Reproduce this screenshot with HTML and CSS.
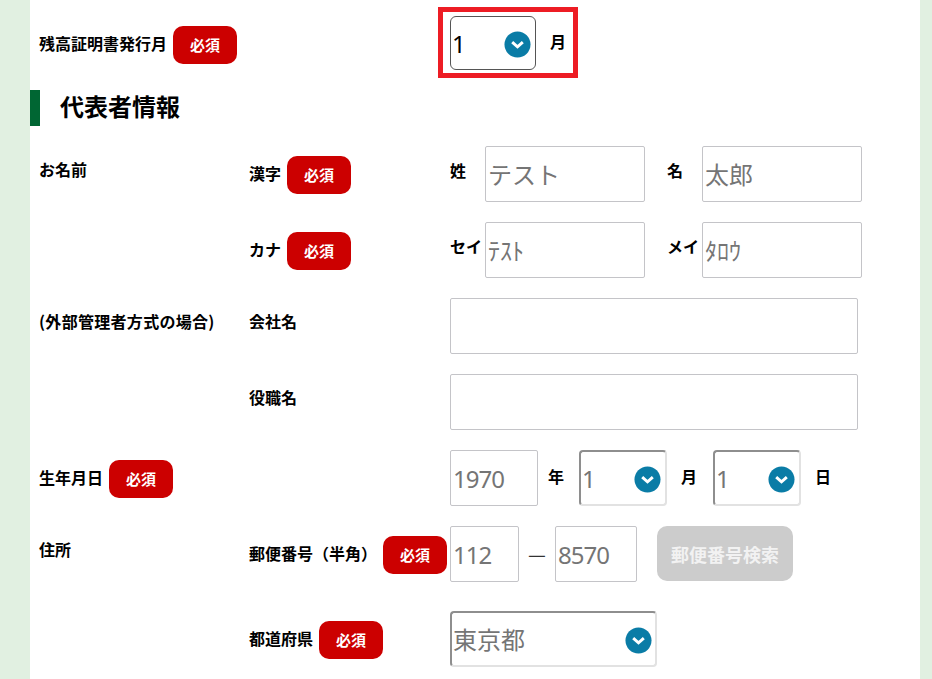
FILE: index.html
```html
<!DOCTYPE html>
<html lang="ja">

<head>
    <meta charset="utf-8">
    <title>残高証明書発行</title>
    <link rel="stylesheet" href="styles.css">
</head>

<body>
    <svg class="defs" width="0" height="0">
        <symbol id="chevron" viewBox="0 0 28 28">
            <circle cx="14" cy="14" r="13.5" fill="#0a7ca6"></circle>
            <path d="M8.500 11.500 L14 16.500 L19.500 11.500" fill="none" stroke="#fff" stroke-width="3"></path>
        </symbol>
    </svg>

    <div class="card">
        <div class="row row-short">
            <div class="label-cell span-two">
                <span class="label">残高証明書発行月</span>
                <span class="badge">必須</span>
            </div>
            <div class="fields">
                <div class="highlight">
                    <div class="select-wrap w86">
                        <select class="select select-dark">
                            <option>1</option>
                        </select>
                        <svg class="chevron"><use href="#chevron"></use></svg>
                    </div>
                    <span class="label unit">月</span>
                </div>
            </div>
        </div>

        <h2 class="heading">代表者情報</h2>

        <div class="row">
            <div class="label-cell top"><span class="label">お名前</span></div>
            <div class="label-cell">
                <span class="label">漢字</span>
                <span class="badge">必須</span>
            </div>
            <div class="fields">
                <span class="label name-label">姓</span>
                <input class="input w160" type="text" placeholder="テスト">
                <span class="label name-label second">名</span>
                <input class="input w160" type="text" placeholder="太郎">
            </div>
        </div>

        <div class="row">
            <div></div>
            <div class="label-cell">
                <span class="label">カナ</span>
                <span class="badge">必須</span>
            </div>
            <div class="fields">
                <span class="label name-label">セイ</span>
                <input class="input w160" type="text" placeholder="ﾃｽﾄ">
                <span class="label name-label second">メイ</span>
                <input class="input w160" type="text" placeholder="ﾀﾛｳ">
            </div>
        </div>

        <div class="row">
            <div class="label-cell top"><span class="label label-wide">(外部管理者方式の場合)</span></div>
            <div class="label-cell top"><span class="label">会社名</span></div>
            <div class="fields">
                <input class="input w408" type="text">
            </div>
        </div>

        <div class="row">
            <div></div>
            <div class="label-cell top"><span class="label">役職名</span></div>
            <div class="fields">
                <input class="input w408" type="text">
            </div>
        </div>

        <div class="row">
            <div class="label-cell">
                <span class="label">生年月日</span>
                <span class="badge">必須</span>
            </div>
            <div></div>
            <div class="fields">
                <input class="input input-num w88" type="text" placeholder="1970">
                <span class="label date-label date-first">年</span>
                <div class="select-wrap w88">
                    <select class="select">
                        <option>1</option>
                    </select>
                    <svg class="chevron"><use href="#chevron"></use></svg>
                </div>
                <span class="label date-label">月</span>
                <div class="select-wrap w88">
                    <select class="select">
                        <option>1</option>
                    </select>
                    <svg class="chevron"><use href="#chevron"></use></svg>
                </div>
                <span class="label date-label">日</span>
            </div>
        </div>

        <div class="row row-wide-gap">
            <div class="label-cell top"><span class="label">住所</span></div>
            <div class="label-cell">
                <span class="label">郵便番号（半角）</span>
                <span class="badge">必須</span>
            </div>
            <div class="fields">
                <input class="input input-num w69" type="text" placeholder="112">
                <span class="dash">—</span>
                <input class="input input-num w82" type="text" placeholder="8570">
                <button class="search-btn" type="button">郵便番号検索</button>
            </div>
        </div>

        <div class="row">
            <div></div>
            <div class="label-cell">
                <span class="label">都道府県</span>
                <span class="badge">必須</span>
            </div>
            <div class="fields">
                <div class="select-wrap w207">
                    <select class="select">
                        <option>東京都</option>
                    </select>
                    <svg class="chevron"><use href="#chevron"></use></svg>
                </div>
            </div>
        </div>
    </div>
</body>

</html>
```

FILE: styles.css
```css
html,
body {
    margin: 0;
    padding: 0;
}

body {
    background: #e1f0e1;
    font-family: "Noto Sans CJK JP", "Noto Sans", sans-serif;
    color: #000;
}

.defs {
    display: block;
    height: 0;
}

.card {
    background: #fff;
    margin: 0 12px 0 30px;
    padding: 16px 0 12px;
    box-sizing: border-box;
    height: 679px;
    overflow: hidden;
}

.row {
    display: grid;
    grid-template-columns: 210px 200px 1fr;
    padding-left: 10px;
    height: 56px;
    margin-bottom: 20px;
}

.row:last-child {
    margin-bottom: 0;
}

.row-short {
    height: 54px;
}

.row-wide-gap {
    margin-bottom: 29px;
}

.span-two {
    grid-column: span 2;
}

.label-cell {
    display: flex;
    align-items: flex-start;
    gap: 6px;
    padding-top: 10px;
}

.label-cell .label {
    line-height: 35px;
}

.label-cell.top {
    padding-top: 12px;
}

.label-cell.top .label {
    line-height: 23px;
}

.label {
    font-size: 16px;
    font-weight: 700;
    line-height: 24px;
    margin-left: -1px;
    white-space: nowrap;
}

.label-wide {
    letter-spacing: 0.3px;
}

.badge {
    width: 64px;
    height: 38px;
    line-height: 38px;
    background: #cc0000;
    border-radius: 10px;
    color: #fff;
    font-size: 15px;
    font-weight: 700;
    text-align: center;
}

.heading {
    margin: 0 0 20px;
    height: 36px;
    line-height: 32px;
    border-left: 10px solid #006633;
    padding-left: 20px;
    font-size: 24px;
    font-weight: 700;
}

.fields {
    display: flex;
    align-items: flex-start;
}

.input {
    height: 56px;
    box-sizing: border-box;
    border: 1px solid #c4c4c8;
    border-radius: 2px;
    background: #fff;
    padding: 0 2px;
    font-family: "Noto Sans", "Noto Sans CJK JP", sans-serif;
    font-size: 24px;
    margin: 0;
}

.input-num {
    letter-spacing: -1px;
}

.w69 { width: 69px; }
.w82 { width: 82px; }
.w88 { width: 88px; }
.w86 { width: 86px; }
.w160 { width: 160px; }
.w207 { width: 207px; }
.w408 { width: 408px; }

.name-label {
    width: 35px;
    padding-top: 12px;
    margin-left: 0;
}

.name-label.second {
    margin-left: 22px;
}

.date-label {
    padding: 14px 16px 0 14px;
    margin-left: 0;
}

.date-first {
    padding: 14px 15px 0 10px;
}

.dash {
    width: 36px;
    text-align: center;
    font-size: 20px;
    line-height: 56px;
    color: #333;
}

.search-btn {
    margin-left: 20px;
    width: 136px;
    height: 55px;
    border: none;
    border-radius: 10px;
    background: #cccccc;
    color: #f2f2f2;
    font-family: "Noto Sans CJK JP", sans-serif;
    font-size: 18px;
    font-weight: 700;
    padding: 0;
}

.select-wrap {
    position: relative;
    height: 56px;
}

.select {
    appearance: none;
    width: 100%;
    height: 100%;
    box-sizing: border-box;
    border: 2px solid;
    border-color: #8e8e8e #e2e2e2 #e2e2e2 #8e8e8e;
    border-radius: 4px;
    background: #fff;
    color: #757575;
    font-family: "Noto Sans", "Noto Sans CJK JP", sans-serif;
    font-size: 24px;
    padding: 0 0 0 1px;
    margin: 0;
}

.select-dark {
    height: 54px;
    border: 1px solid #555;
    border-radius: 6px;
    color: #000;
}

.chevron {
    position: absolute;
    right: 5px;
    top: 15.500px;
    width: 27px;
    height: 27px;
    pointer-events: none;
}

.w88 .chevron {
    right: 6px;
}

.highlight {
    display: flex;
    align-items: flex-start;
    margin: -9px 0 0 -12px;
    padding: 4px 7px 3px 7px;
    border: 5px solid #ed1c24;
    height: 71px;
    box-sizing: border-box;
}

.highlight .chevron {
    top: 14.500px;
}

.unit {
    margin-left: 14px;
    padding-top: 13px;
}
```
